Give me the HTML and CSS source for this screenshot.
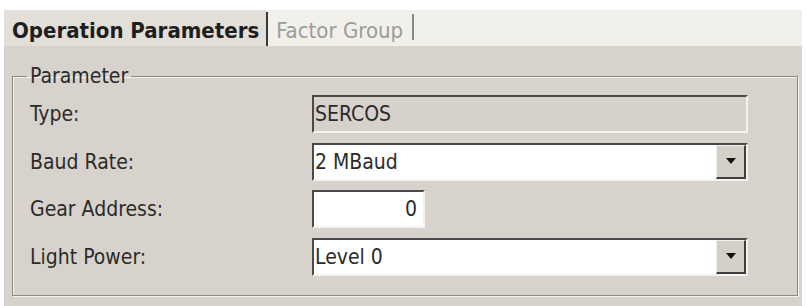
FILE: index.html
```html
<!DOCTYPE html>
<html>
<head>
<meta charset="utf-8">
<link rel="stylesheet" href="styles.css">
</head>
<body>
<div class="window">
  <div class="tabs">
    <div class="tab active">Operation Parameters</div>
    <div class="sep"></div>
    <div class="tab inactive">Factor Group</div>
    <div class="sep"></div>
  </div>
  <div class="panel">
    <fieldset class="group">
      <legend>Parameter</legend>
      <div class="row">
        <span class="label">Type:</span>
        <div class="field readonly wide">SERCOS</div>
      </div>
      <div class="row">
        <span class="label">Baud Rate:</span>
        <div class="field combo wide"><span class="value">2 MBaud</span><span class="drop"><span class="arrow"></span></span></div>
      </div>
      <div class="row">
        <span class="label">Gear Address:</span>
        <div class="field num">0</div>
      </div>
      <div class="row">
        <span class="label">Light Power:</span>
        <div class="field combo wide"><span class="value">Level 0</span><span class="drop"><span class="arrow"></span></span></div>
      </div>
    </fieldset>
  </div>
</div>
</body>
</html>
```

FILE: styles.css
```css
html, body {
  margin: 0;
  padding: 0;
  background: #ffffff;
}
body {
  width: 806px;
  height: 306px;
  overflow: hidden;
  font-family: "DejaVu Sans Condensed", "DejaVu Sans", sans-serif;
  color: #2b2b2b;
}
.window {
  margin: 10px 0 0 4px;
  width: 798px;
  height: 296px;
  display: flex;
  flex-direction: column;
}
.tabs {
  height: 36px;
  background: #f1f0eb;
  display: flex;
  align-items: stretch;
}
.tab {
  display: flex;
  align-items: center;
  font-size: 22px;
  padding: 4px 8px 0 8px;
}
.tab.active {
  background: #e2dfd9;
  font-weight: bold;
  color: #1e1e1e;
  padding-left: 8px;
  padding-right: 7px;
}
.tab.inactive {
  color: #9c9c9a;
  padding-left: 8px;
  padding-right: 9px;
}
.sep {
  width: 2px;
  background: #3a3a3a;
  margin: 2px 0 0 0;
}
.tab.inactive + .sep {
  background: #8a8a88;
  margin: 4px 0 6px 0;
}
.panel {
  flex: 1;
  background: #d7d3cc;
  padding: 20px 4px 0 8px;
}
.group {
  margin: 0;
  padding: 9px 0 0 15px;
  border: 1px solid #8e8a83;
  box-shadow: 1px 1px 0 #f4f2ee, inset 1px 1px 0 #f4f2ee;
  height: 230px;
  box-sizing: border-box;
}
legend {
  font-size: 21px;
  line-height: 20px;
  padding: 0 3px;
  margin-left: -1px;
  color: #2b2b2b;
}
.row {
  display: flex;
  align-items: center;
  height: 38px;
  margin-bottom: 9.5px;
  padding-left: 2px;
}
.label {
  width: 282px;
  font-size: 21px;
}
.field {
  box-sizing: border-box;
  height: 38px;
  border-top: 2px solid #4a4a4a;
  border-left: 2px solid #4a4a4a;
  border-bottom: 2px solid #f4f3f0;
  border-right: 2px solid #f4f3f0;
  background: #ffffff;
  font-size: 21px;
  display: flex;
  align-items: center;
  padding-left: 1px;
}
.wide {
  width: 436px;
}
.readonly {
  background: #d6d2cb;
}
.num {
  width: 113px;
  justify-content: flex-end;
  padding-right: 6px;
}
.combo {
  padding-right: 0;
}
.value {
  flex: 1;
}
.drop {
  width: 30px;
  height: 100%;
  background: #d4d0c8;
  box-sizing: border-box;
  border-right: 2px solid #3e3e3e;
  border-bottom: 2px solid #3e3e3e;
  border-top: 1px solid #f0efea;
  border-left: 1px solid #f0efea;
  display: flex;
  align-items: center;
  justify-content: center;
}
.arrow {
  width: 0;
  height: 0;
  border-left: 5px solid transparent;
  border-right: 5px solid transparent;
  border-top: 6px solid #111;
}
```
